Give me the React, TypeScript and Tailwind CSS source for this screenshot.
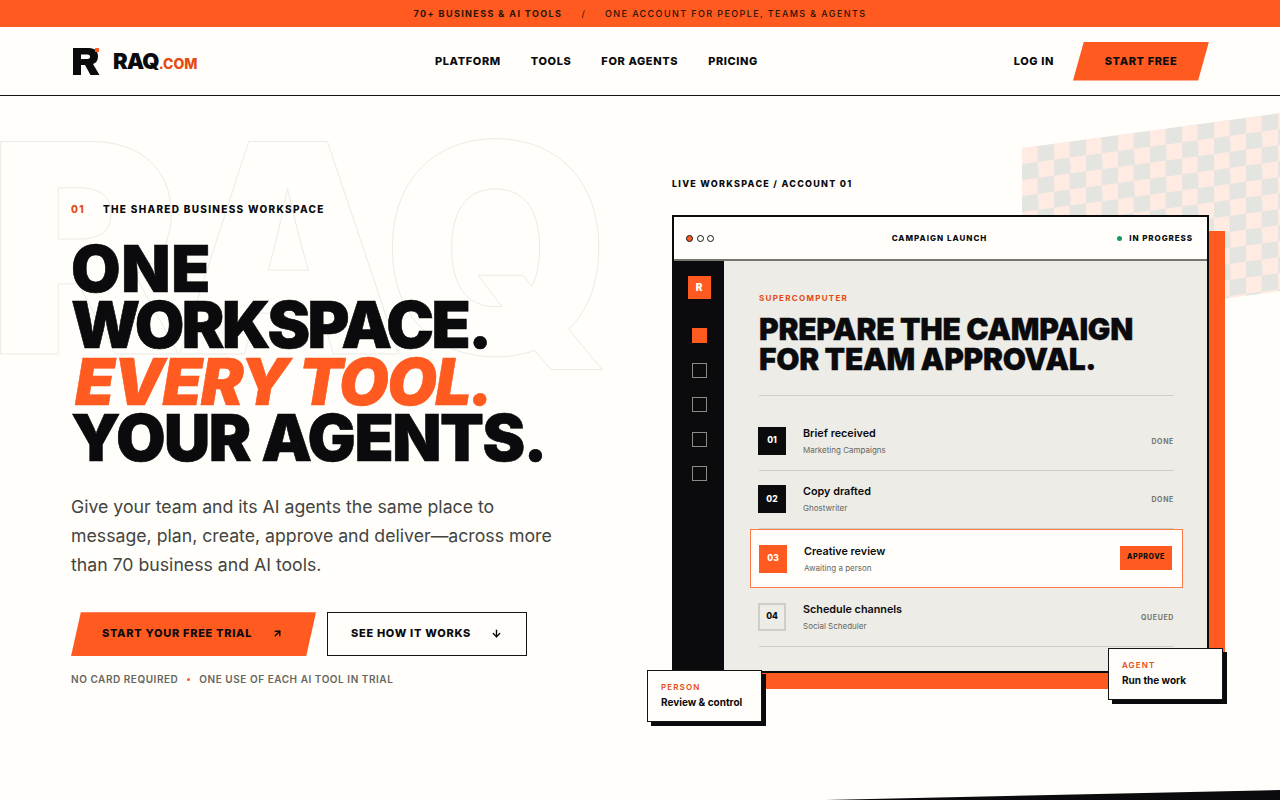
import React from 'react';
import { ArrowUpRight, ArrowDown } from 'lucide-react';

const navLinks = ['PLATFORM', 'TOOLS', 'FOR AGENTS', 'PRICING'];

const steps = [
  { num: '01', title: 'Brief received', sub: 'Marketing Campaigns', status: 'DONE', kind: 'done' },
  { num: '02', title: 'Copy drafted', sub: 'Ghostwriter', status: 'DONE', kind: 'done' },
  { num: '03', title: 'Creative review', sub: 'Awaiting a person', status: 'APPROVE', kind: 'active' },
  { num: '04', title: 'Schedule channels', sub: 'Social Scheduler', status: 'QUEUED', kind: 'queued' },
];

const Logo = () => (
  <div className="flex items-center">
    <svg width="27" height="27" viewBox="0 0 27 27" className="shrink-0">
      <path d="M0 0H16C22 0 25 3.5 25 8.5C25 12.5 23 15 20 16L26.5 27H17.5L12 17H8V27H0ZM8 6.5V11H14.5C16 11 17 10 17 8.7C17 7.4 16 6.5 14.5 6.5Z" fill="#0b0b0d" fillRule="evenodd" />
      <rect x="22" y="0" width="4" height="4" fill="#ff5a1f" />
    </svg>
    <span className="ml-[13px] text-[22px] leading-none font-black tracking-[-0.04em] text-[#0b0b0d]">RAQ</span>
    <span className="mt-[5px] text-[14px] leading-none font-extrabold text-[#e64a12]">.COM</span>
  </div>
);

const Header = () => (
  <header className="flex h-[69px] items-center border-b border-[#141414] pr-[71px] pl-[73px]">
    <div className="w-[362px]">
      <Logo />
    </div>
    <nav className="flex gap-[30px] text-[11px] font-extrabold tracking-[0.055em] text-[#0b0b0d]">
      {navLinks.map(link => (
        <a key={link}>{link}</a>
      ))}
    </nav>
    <div className="ml-auto flex items-center gap-[19px] text-[11px] font-extrabold tracking-[0.055em] text-[#0b0b0d]">
      <a>LOG IN</a>
      <a className="flex h-[39px] w-[136px] items-center justify-center bg-[#ff5a1f] [clip-path:polygon(8%_0,100%_0,92%_100%,0_100%)]">
        START FREE
      </a>
    </div>
  </header>
);

const StepRow = ({ step }: { step: (typeof steps)[number] }) => {
  const active = step.kind === 'active';
  const numClass = active
    ? 'bg-[#ff5a1f] text-[#fffefa]'
    : step.kind === 'queued'
      ? 'border-2 border-[#cfcfca] text-[#0b0b0d]'
      : 'bg-[#0b0b0d] text-[#fffefa]';

  return (
    <div
      className={
        active
          ? 'relative -mx-[9px] flex h-[58.67px] items-center border border-[#ff7a4a] bg-[#fffefa] pr-[10px] pl-[9px]'
          : 'flex h-[58.67px] items-center border-b border-[#cfcfca]'
      }
    >
      <div className={`-ml-px flex h-[28px] w-[28px] shrink-0 items-center justify-center text-[8.5px] font-extrabold ${numClass}`}>
        {step.num}
      </div>
      <div className="mt-px ml-[17px]">
        <div className="text-[10.8px] leading-[14px] font-semibold text-[#0b0b0d]">{step.title}</div>
        <div className="mt-[3px] text-[8px] leading-[12px] text-[#66665f]">{step.sub}</div>
      </div>
      {active ? (
        <button className="-mt-[2px] ml-auto flex h-[24px] w-[52px] items-center justify-center bg-[#ff5a1f] text-[7px] font-extrabold tracking-[0.08em] text-[#0b0b0d]">
          {step.status}
        </button>
      ) : (
        <span className="mt-[2px] ml-auto text-[7px] font-bold tracking-[0.09em] text-[#77776f]">{step.status}</span>
      )}
    </div>
  );
};

const NoteCard = ({ label, text, className }: { label: string; text: string; className: string }) => (
  <div className={`absolute z-10 h-[52px] w-[115px] border border-[#141414] bg-[#fffefa] px-[13px] pt-[10px] shadow-[4px_4px_0_#0b0b0d] ${className}`}>
    <div className="text-[8px] leading-[12px] font-semibold tracking-[0.14em] text-[#e64a12]">{label}</div>
    <div className="mt-[2px] text-[10px] leading-[14px] font-bold text-[#0b0b0d]">{text}</div>
  </div>
);

const WorkspacePanel = () => (
  <div className="relative h-[458px] w-[537px] border-2 border-[#0b0b0d] bg-[#fffefa] shadow-[16px_16px_0_#ff5a1f]">
    <div className="flex h-[44px] items-center justify-between border-b-2 border-[#77776f] pr-[14px] pl-[12px]">
      <div className="flex w-[110px] gap-[3.5px]">
        <span className="h-[7px] w-[7px] rounded-full border border-[#141414] bg-[#ff5a1f]" />
        <span className="h-[7px] w-[7px] rounded-full border border-[#141414]" />
        <span className="h-[7px] w-[7px] rounded-full border border-[#141414]" />
      </div>
      <span className="text-[8px] font-extrabold tracking-[0.125em] text-[#0b0b0d]">CAMPAIGN LAUNCH</span>
      <span className="flex w-[110px] items-center justify-end text-[8px] font-extrabold tracking-[0.115em] text-[#0b0b0d]">
        <span className="mr-[7px] h-[5px] w-[5px] rounded-full bg-[#129a63]" />
        IN PROGRESS
      </span>
    </div>
    <div className="flex h-[410px]">
      <aside className="flex w-[50px] shrink-0 flex-col items-center bg-[#0b0b0d] pt-[15px]">
        <div className="flex h-[23px] w-[23px] items-center justify-center bg-[#ff5a1f] text-[10px] font-black text-[#fffefa]">R</div>
        <div className="mt-[29px] h-[15px] w-[15px] bg-[#ff5a1f]" />
        {[0, 1, 2, 3].map(i => (
          <div key={i} className="mt-[19.6px] h-[15px] w-[15px] border border-[#8b8b86]" />
        ))}
      </aside>
      <main className="flex-1 bg-[#edece7] pt-[32px] pr-[33px] pl-[35px]">
        <div className="text-[8px] leading-[10px] font-bold tracking-[0.16em] text-[#e64a12]">SUPERCOMPUTER</div>
        <h2 className="mt-[11px] border-b border-[#cfcfca] pb-[21px] text-[30px] leading-[30px] font-black tracking-[-0.01em] text-[#0b0b0d] [-webkit-text-stroke:0.3px_currentColor]">
          PREPARE THE CAMPAIGN
          <br />
          FOR TEAM APPROVAL.
        </h2>
        <div className="mt-[16px]">
          {steps.map(step => (
            <StepRow key={step.num} step={step} />
          ))}
        </div>
      </main>
    </div>
    <NoteCard label="PERSON" text="Review & control" className="-bottom-[51px] -left-[27px]" />
    <NoteCard label="AGENT" text="Run the work" className="-right-[16px] -bottom-[29px]" />
  </div>
);

const Hero = () => (
  <section className="relative grid flex-1 grid-cols-[672px_537px]">
    {/* outlined watermark */}
    <div className="absolute -top-[16px] -left-[13px] text-[292px] leading-[1.15] font-black tracking-[-0.03em] text-transparent select-none [-webkit-text-stroke:1px_#ebebe6]">
      RAQ
    </div>
    {/* tilted check pattern behind the panel */}
    <div className="absolute top-[52px] left-[1022px] h-[178px] w-[300px] [transform-origin:0_0] [transform:skewY(-7.7deg)] bg-[repeating-conic-gradient(#e4e4e1_0_25%,#ffebe2_0_50%)] bg-[length:32px_32px]" />
    <div className="relative pt-[107px] pl-[71px]">
      <div className="flex items-center text-[10px] leading-[12px] font-extrabold tracking-[0.13em]">
        <span className="w-[32px] text-[#e64a12]">01</span>
        <span className="text-[#0b0b0d]">THE SHARED BUSINESS WORKSPACE</span>
      </div>
      <h1 className="mt-[26px] text-[64px] leading-[56.3px] font-black text-[#0b0b0d] [-webkit-text-stroke:0.6px_currentColor]">
        <span className="tracking-[0.01em]">ONE</span>
        <br />
        <span className="tracking-[-0.04em]">WORKSPACE.</span>
        <br />
        <em className="pl-[4px] tracking-[-0.025em] text-[#ff5a1f]">EVERY TOOL.</em>
        <br />
        <span className="tracking-[-0.023em]">YOUR AGENTS.</span>
      </h1>
      <p className="mt-[26px] w-[500px] text-[17.7px] leading-[29px] text-[#44443f]">
        Give your team and its AI agents the same place to message, plan, create, approve and deliver—across more than 70 business and AI tools.
      </p>
      <div className="mt-[33px] flex gap-[11px]">
        <a className="flex h-[44px] w-[245px] items-center justify-between bg-[#ff5a1f] pr-[33px] pb-[2px] pl-[31px] text-[11px] font-extrabold tracking-[0.064em] text-[#0b0b0d] [clip-path:polygon(4%_0,100%_0,96%_100%,0_100%)]">
          START YOUR FREE TRIAL
          <ArrowUpRight size={11} strokeWidth={3} />
        </a>
        <a className="flex h-[44px] w-[200px] items-center justify-between border border-[#141414] bg-[#fffefa] pr-[24px] pb-[2px] pl-[23px] text-[11px] font-extrabold tracking-[0.064em] text-[#0b0b0d]">
          SEE HOW IT WORKS
          <ArrowDown size={11} strokeWidth={3} />
        </a>
      </div>
      <div className="mt-[17px] flex items-center text-[10px] leading-[12px] font-semibold tracking-[0.054em] text-[#66665f]">
        NO CARD REQUIRED
        <span className="mx-[9px] h-[3px] w-[3px] rounded-full bg-[#ff5a1f]" />
        ONE USE OF EACH AI TOOL IN TRIAL
      </div>
    </div>
    <div className="relative pt-[82px]">
      <div className="mb-[25px] text-[9px] leading-[12px] font-extrabold tracking-[0.14em] text-[#0b0b0d]">LIVE WORKSPACE / ACCOUNT 01</div>
      <WorkspacePanel />
    </div>
  </section>
);

export default function App() {
  return (
    <div className="relative flex h-screen flex-col overflow-hidden bg-[#fffefa] font-['Inter',sans-serif]">
      <div className="flex h-[27px] items-center justify-center bg-[#ff5a1f] text-[9px] tracking-[0.155em] text-[#2a1408]">
        <span className="font-bold">70+ BUSINESS &amp; AI TOOLS</span>
        <span className="mx-[19px]">/</span>
        <span className="font-medium">ONE ACCOUNT FOR PEOPLE, TEAMS &amp; AGENTS</span>
      </div>
      <Header />
      <Hero />
      <div className="absolute right-0 bottom-0 h-[10px] w-[455px] bg-[#0b0b0d] [clip-path:polygon(0_100%,100%_0,100%_100%)]" />
    </div>
  );
}
